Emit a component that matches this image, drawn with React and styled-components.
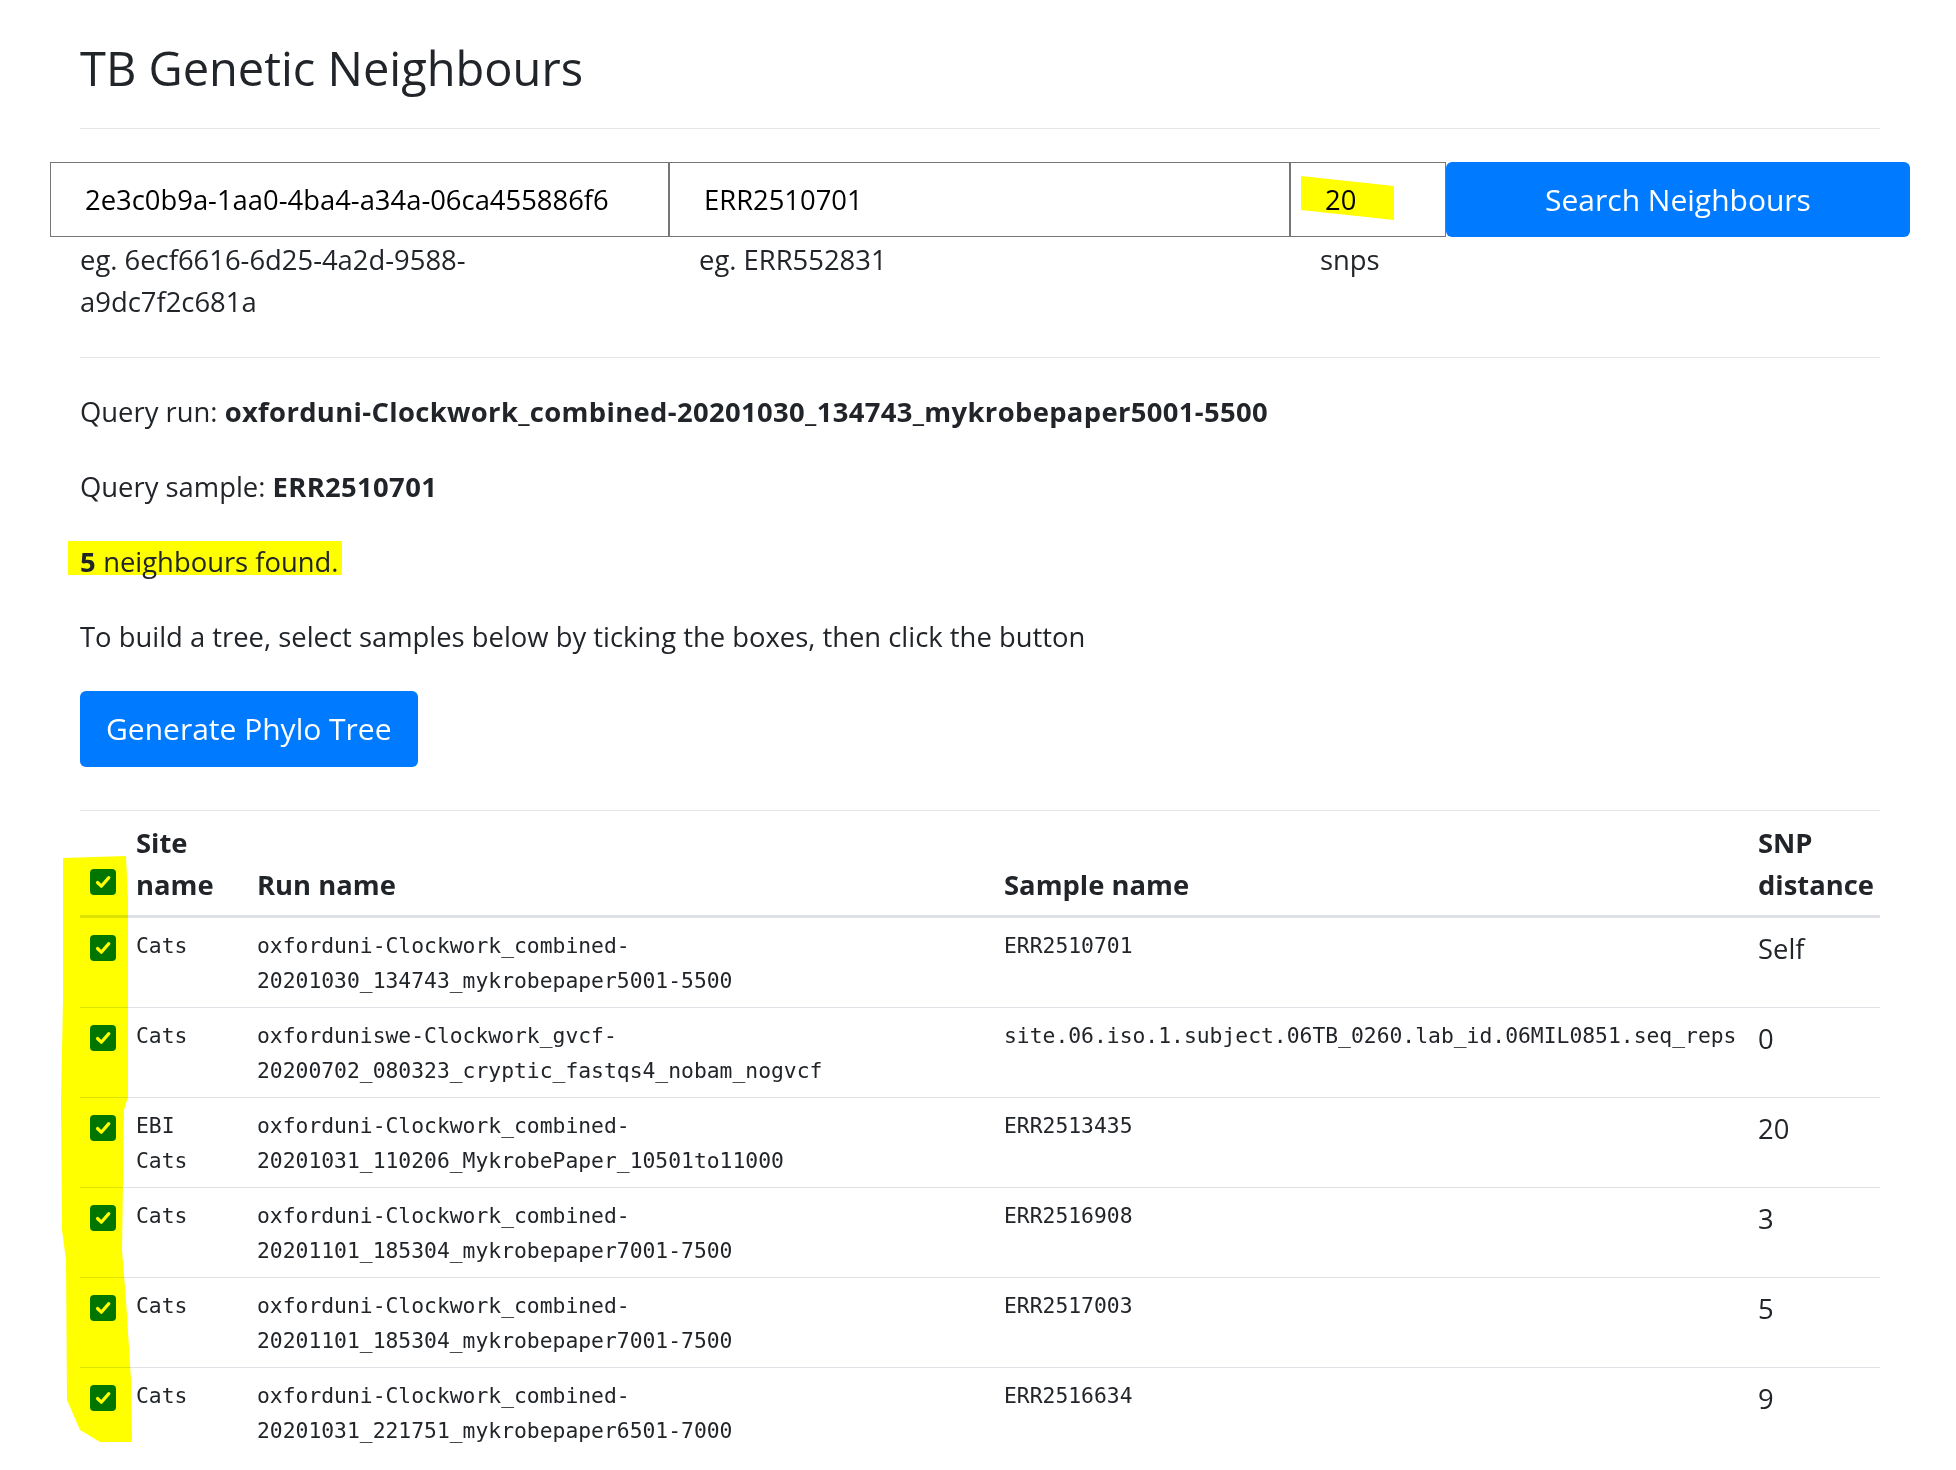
import React from 'react';
import styled, { createGlobalStyle } from 'styled-components';

const GlobalStyle = createGlobalStyle`
  * { box-sizing: border-box; }
  body {
    margin: 0;
    background: #fff;
    color: #212529;
    font-family: "Open Sans", "Noto Sans", sans-serif;
    font-size: 27.4px;
    line-height: 42px;
  }
  strong {
    font-weight: 700;
    letter-spacing: 0.35px;
  }
`;

const Page = styled.div`
  position: relative;
  width: 1800px;
  margin-left: 80px;
  padding-bottom: 20px;
`;

const Title = styled.h1`
  margin: 40px 0 0;
  font-size: 47px;
  font-weight: 500;
  line-height: 57px;
`;

const Rule = styled.hr`
  margin: ${(p) => p.$top}px 0 0;
  height: 0;
  border: 0;
  border-top: 1px solid rgba(0, 0, 0, 0.1);
`;

const SearchForm = styled.form`
  display: grid;
  grid-template-columns: 619px 621px 156px 464px;
  margin: 33px 0 0 -30px;
`;

const Field = styled.div`
  position: relative;
  display: flex;
  flex-direction: column;
`;

const TextInput = styled.input`
  height: 75px;
  width: 100%;
  padding: 0 0 0 34px;
  border: 1px solid #767676;
  border-radius: 0;
  font: inherit;
  color: #000;
  background: #fff;
  outline: none;
`;

const HelpText = styled.div`
  margin-top: 2px;
  padding-left: 30px;
  max-width: 530px;
`;

const PrimaryButton = styled.button`
  height: ${(p) => (p.$tall ? 76 : 75)}px;
  padding: 0 26px;
  border: 0;
  border-radius: 6px;
  background: #007bff;
  color: #fff;
  font-family: inherit;
  font-size: 30px;
  line-height: 42px;
  cursor: pointer;
`;

const Para = styled.p`
  margin: 0 0 33px;
  ${(p) => p.$first && 'margin-top: 33px;'}
`;

const Mark = styled.span`
  display: inline-block;
  margin-left: -12px;
  padding: 0 3px 0 12px;
  background: linear-gradient(#ffff00, #ffff00) no-repeat 0 0 / 100% 34px;
`;

const Marker = styled.svg`
  position: absolute;
  left: ${(p) => p.$left}px;
  top: ${(p) => p.$top}px;
  z-index: 2;
  pointer-events: none;
  mix-blend-mode: multiply;
`;

const TableWrap = styled.div`
  position: relative;
`;

const Table = styled.table`
  width: 100%;
  table-layout: fixed;
  border-collapse: collapse;
`;

const Th = styled.th`
  padding: 11px ${(p) => p.$padRight || 10}px 9px 10px;
  vertical-align: bottom;
  text-align: left;
  font-weight: 700;
  border-bottom: 3px solid #dee2e6;
`;

const Row = styled.tr`
  & + & td {
    border-top: 1px solid #dee2e6;
  }
`;

const Td = styled.td`
  padding: 10px ${(p) => p.$padRight || 10}px 9px 10px;
  vertical-align: top;
  ${(p) =>
    p.$mono &&
    `
    font-family: "DejaVu Sans Mono", "Liberation Mono", monospace;
    font-size: 21.35px;
    line-height: 35px;
  `}
  ${(p) => p.$nowrap && 'white-space: nowrap;'}
`;

const Box = styled.span`
  display: flex;
  align-items: center;
  justify-content: center;
  width: 26px;
  height: 26px;
  margin: ${(p) => (p.$head ? '0 0 11px' : '7px 0 0')};
  border-radius: 4px;
  background: #0075ff;
`;

const Check = ({ head }) => (
  <Box $head={head}>
    <svg width="18" height="18" viewBox="0 0 18 18">
      <path d="M3.5 9.5 L7.3 13.2 L14.8 4.6" fill="none" stroke="#fff" strokeWidth="3.2" strokeLinecap="round" strokeLinejoin="round" />
    </svg>
  </Box>
);

const rows = [
  { site: 'Cats', run: 'oxforduni-Clockwork_combined-20201030_134743_mykrobepaper5001-5500', sample: 'ERR2510701', snp: 'Self' },
  { site: 'Cats', run: 'oxforduniswe-Clockwork_gvcf-20200702_080323_cryptic_fastqs4_nobam_nogvcf', sample: 'site.06.iso.1.subject.06TB_0260.lab_id.06MIL0851.seq_reps', snp: '0' },
  { site: 'EBI Cats', run: 'oxforduni-Clockwork_combined-20201031_110206_MykrobePaper_10501to11000', sample: 'ERR2513435', snp: '20' },
  { site: 'Cats', run: 'oxforduni-Clockwork_combined-20201101_185304_mykrobepaper7001-7500', sample: 'ERR2516908', snp: '3' },
  { site: 'Cats', run: 'oxforduni-Clockwork_combined-20201101_185304_mykrobepaper7001-7500', sample: 'ERR2517003', snp: '5' },
  { site: 'Cats', run: 'oxforduni-Clockwork_combined-20201031_221751_mykrobepaper6501-7000', sample: 'ERR2516634', snp: '9' },
];

const App = () => (
  <>
    <GlobalStyle />
    <Page>
      <Title>TB Genetic Neighbours</Title>
      <Rule $top={31} />

      <SearchForm onSubmit={(e) => e.preventDefault()}>
        <Field>
          <TextInput defaultValue="2e3c0b9a-1aa0-4ba4-a34a-06ca455886f6" />
          <HelpText>eg. 6ecf6616-6d25-4a2d-9588-a9dc7f2c681a</HelpText>
        </Field>
        <Field>
          <TextInput defaultValue="ERR2510701" />
          <HelpText>eg. ERR552831</HelpText>
        </Field>
        <Field>
          <TextInput defaultValue="20" />
          <HelpText>snps</HelpText>
          <Marker $left={0} $top={0} width="156" height="75" viewBox="0 0 156 75">
            <polygon points="11,14 104,24 104,58 11,48" fill="#ffff00" />
          </Marker>
        </Field>
        <PrimaryButton type="submit">Search Neighbours</PrimaryButton>
      </SearchForm>

      <Rule $top={34} />

      <Para $first>
        Query run: <strong>oxforduni-Clockwork_combined-20201030_134743_mykrobepaper5001-5500</strong>
      </Para>
      <Para>
        Query sample: <strong>ERR2510701</strong>
      </Para>
      <Para>
        <Mark>
          <strong>5</strong> neighbours found.
        </Mark>
      </Para>
      <Para>To build a tree, select samples below by ticking the boxes, then click the button</Para>
      <PrimaryButton $tall type="button">Generate Phylo Tree</PrimaryButton>

      <Rule $top={43} />

      <TableWrap>
        <Table>
          <colgroup>
            <col style={{ width: 46 }} />
            <col style={{ width: 121 }} />
            <col style={{ width: 747 }} />
            <col style={{ width: 754 }} />
            <col style={{ width: 132 }} />
          </colgroup>
          <thead>
            <tr>
              <Th>
                <Check head />
              </Th>
              <Th $padRight={14}>Site name</Th>
              <Th>Run name</Th>
              <Th>Sample name</Th>
              <Th>SNP distance</Th>
            </tr>
          </thead>
          <tbody>
            {rows.map((r, i) => (
              <Row key={i}>
                <Td>
                  <Check />
                </Td>
                <Td $mono $padRight={14}>
                  {r.site}
                </Td>
                <Td $mono>{r.run}</Td>
                <Td $mono $nowrap>
                  {r.sample}
                </Td>
                <Td>{r.snp}</Td>
              </Row>
            ))}
          </tbody>
        </Table>
        <Marker $left={-20} $top={0} width="80" height="640" viewBox="-20 0 80 640">
          <path
            d="M-17 47 L46 45 L48 89 L48 286 L44 299 L42 439 L46 489 L51 569 L52 631 L20 631 L0 619 L-13 589 L-14 449 L-18 419 L-19 289 L-17 189 Z"
            fill="#ffff00"
          />
        </Marker>
      </TableWrap>
    </Page>
  </>
);

export default App;
